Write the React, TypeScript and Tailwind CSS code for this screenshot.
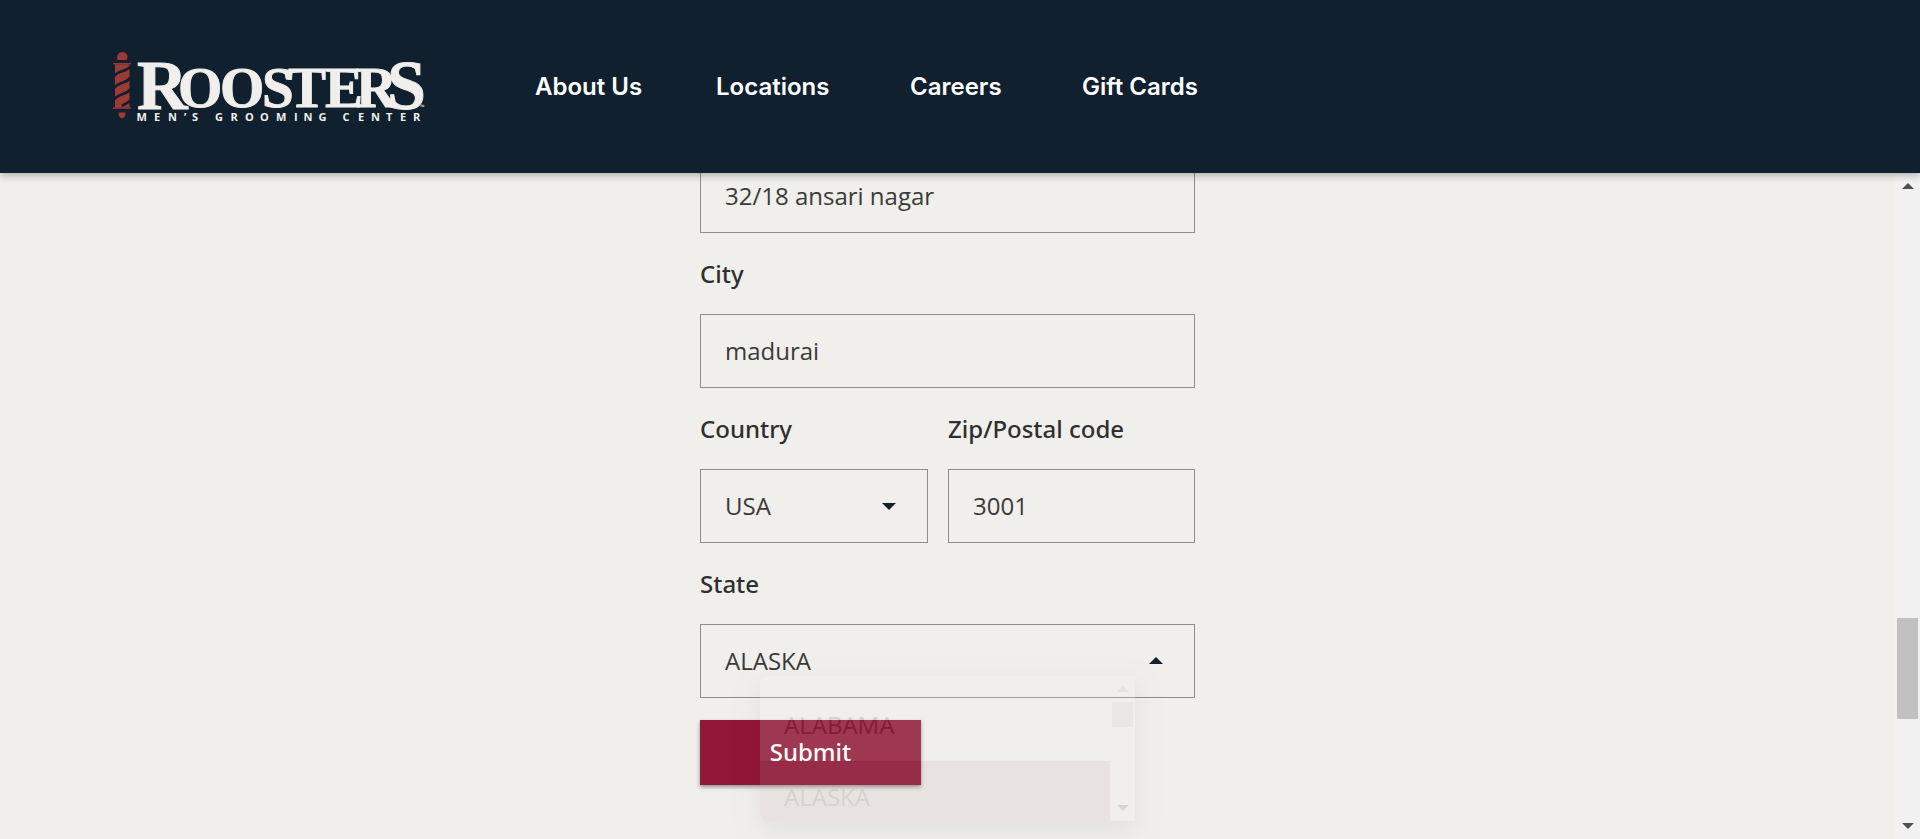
import React from "react";

const navItems = ["About Us", "Locations", "Careers", "Gift Cards"];

const fieldClass =
  "block h-[74px] w-full appearance-none rounded-none border border-[#8f8f8f] bg-transparent px-6 text-2xl font-normal text-[#3a3a3a] outline-none";
const labelClass =
  "block pt-6 pb-6 font-['Noto_Sans',sans-serif] text-2xl leading-[33px] font-medium text-[#2f2f2f]";

function Logo() {
  return (
    <svg width="340" height="90" viewBox="0 2 340 90" role="img" aria-label="Roosters Men's Grooming Center">
      <g fill="#9e3a35">
        <path d="M17.500 20c-1.500-5 1.500-8 5-8s6 3 4.500 8z" />
        <rect x="13" y="23" width="18" height="1.300" />
        <rect x="15" y="24.300" width="14.500" height="43" />
        <rect x="13" y="67.300" width="18" height="1.500" />
        <path d="M18.700 72.500h6.600v2c0 5-6.600 5-6.600 0z" />
      </g>
      <g fill="none" stroke="#10202f" strokeWidth="2.800">
        <path d="M30 26.500c-2 5-13 4-15.500 9.500" />
        <path d="M30 37.500c-2 6-13 4.500-15.500 10.500" />
        <path d="M30 49c-2 6-13 4.500-15.500 10.500" />
        <path d="M30 60.500c-1.500 3-5 3-8 5.500" />
      </g>
      <g fill="#f0efeb" fontFamily="'Liberation Serif', serif" fontWeight="700" stroke="#f0efeb" strokeWidth="0.900">
        <text x="37" y="68.500" fontSize="70">R</text>
        <text x="78 120 162 188 225 256" y="66.500" fontSize="57">OOSTER</text>
        <text x="287" y="68.500" fontSize="70">S</text>
      </g>
      <text
        x="36.500 54 68 84 92 115 130.500 145 160 176 194 203.500 218.500 242.500 258 271 286 300 313"
        y="81"
        fontSize="11"
        fontWeight="700"
        fontFamily="'Open Sans', sans-serif"
        fill="#f0efeb"
      >
        MEN’SGROOMINGCENTER
      </text>
      <text x="320" y="69" fontSize="6" fontFamily="'Open Sans', sans-serif" fill="#f0efeb">™</text>
    </svg>
  );
}

function Triangle({ up = false, className }: { up?: boolean; className: string }) {
  return (
    <svg viewBox="0 0 12 6" className={className} fill="currentColor" aria-hidden="true">
      <path d={up ? "M0 6L6 0l6 6z" : "M0 0h12L6 6z"} />
    </svg>
  );
}

export default function App() {
  return (
    <div className="flex h-screen flex-col overflow-hidden bg-[#f0efeb] font-['Open_Sans',sans-serif]">
      <header className="relative z-20 flex h-[173px] shrink-0 items-center bg-[#10202f] pl-[100px] shadow-[0_2px_8px_rgba(0,0,0,0.3)]">
        <a href="#" className="block w-[435px] shrink-0">
          <Logo />
        </a>
        <nav className="grid grid-cols-[181px_194px_172px_auto] font-['Inter',sans-serif] text-2xl font-semibold text-white">
          {navItems.map((item) => (
            <a key={item} href="#" className="whitespace-nowrap">
              {item}
            </a>
          ))}
        </nav>
      </header>

      <div className="flex min-h-0 flex-1">
        <main className="min-w-0 flex-1 overflow-hidden">
          <form className="mx-auto -mt-[14px] w-[495px]" onSubmit={(e) => e.preventDefault()}>
            <input aria-label="Address" className={`${fieldClass} pb-0.5`} defaultValue="32/18 ansari nagar" />

            <label htmlFor="city" className={labelClass}>City</label>
            <input id="city" className={`${fieldClass} pb-0.5`} defaultValue="madurai" />

            <div className="flex gap-5">
              <div className="w-[228px]">
                <label htmlFor="country" className={labelClass}>Country</label>
                <div className="relative">
                  <select id="country" className={fieldClass} defaultValue="USA">
                    <option>USA</option>
                  </select>
                  <Triangle className="pointer-events-none absolute top-[34px] right-8 w-[14px] text-[#10202f]" />
                </div>
              </div>
              <div className="min-w-0 flex-1">
                <label htmlFor="zip" className={labelClass}>Zip/Postal code</label>
                <input id="zip" className={`${fieldClass} pb-0.5`} defaultValue="3001" />
              </div>
            </div>

            <label htmlFor="state" className={labelClass}>State</label>
            <div className="relative">
              <select id="state" className={fieldClass} defaultValue="ALASKA">
                <option>ALABAMA</option>
                <option>ALASKA</option>
              </select>
              <Triangle up className="pointer-events-none absolute top-[33px] right-8 w-[14px] text-[#10202f]" />

              <div className="absolute top-[52px] left-[60px] z-10 flex h-[145px] w-[375px] overflow-hidden rounded-l-lg bg-[#f0efeb] opacity-15 shadow-[0_8px_24px_rgba(0,0,0,0.4)]">
                <ul role="listbox" aria-label="State" className="min-w-0 flex-1 pt-[13px] text-2xl font-normal text-[#3a3a3a]">
                  <li role="option" aria-selected="false" className="flex h-[72px] items-center px-6">ALABAMA</li>
                  <li role="option" aria-selected="true" className="flex h-[72px] items-center bg-[#bfa5a6] px-6">ALASKA</li>
                </ul>
                <div className="flex w-[25px] flex-col items-center bg-[#f1f1f1] text-[#505050]">
                  <Triangle up className="my-[10px] w-3 text-[#a3a3a3]" />
                  <div className="h-[25px] w-[21px] bg-[#c1c1c1]" />
                  <Triangle className="mt-auto mb-[10px] w-3" />
                </div>
              </div>
            </div>

            <button
              type="submit"
              className="mt-[22px] block h-[65px] w-[221px] bg-[#901735] pb-0.5 font-['Noto_Sans',sans-serif] text-2xl font-medium text-white shadow-[0_2px_4px_rgba(0,0,0,0.4)]"
            >
              Submit
            </button>
          </form>
        </main>

        <div className="flex w-[25px] shrink-0 flex-col items-center bg-[#f1f1f1] py-[10px] text-[#505050]" aria-hidden="true">
          <Triangle up className="w-3 shrink-0" />
          <div className="flex w-full flex-1 flex-col items-center">
            <div className="grow-[429]" />
            <div className="h-[101px] w-[21px] bg-[#c1c1c1]" />
            <div className="grow-[104]" />
          </div>
          <Triangle className="w-3 shrink-0" />
        </div>
      </div>
    </div>
  );
}
